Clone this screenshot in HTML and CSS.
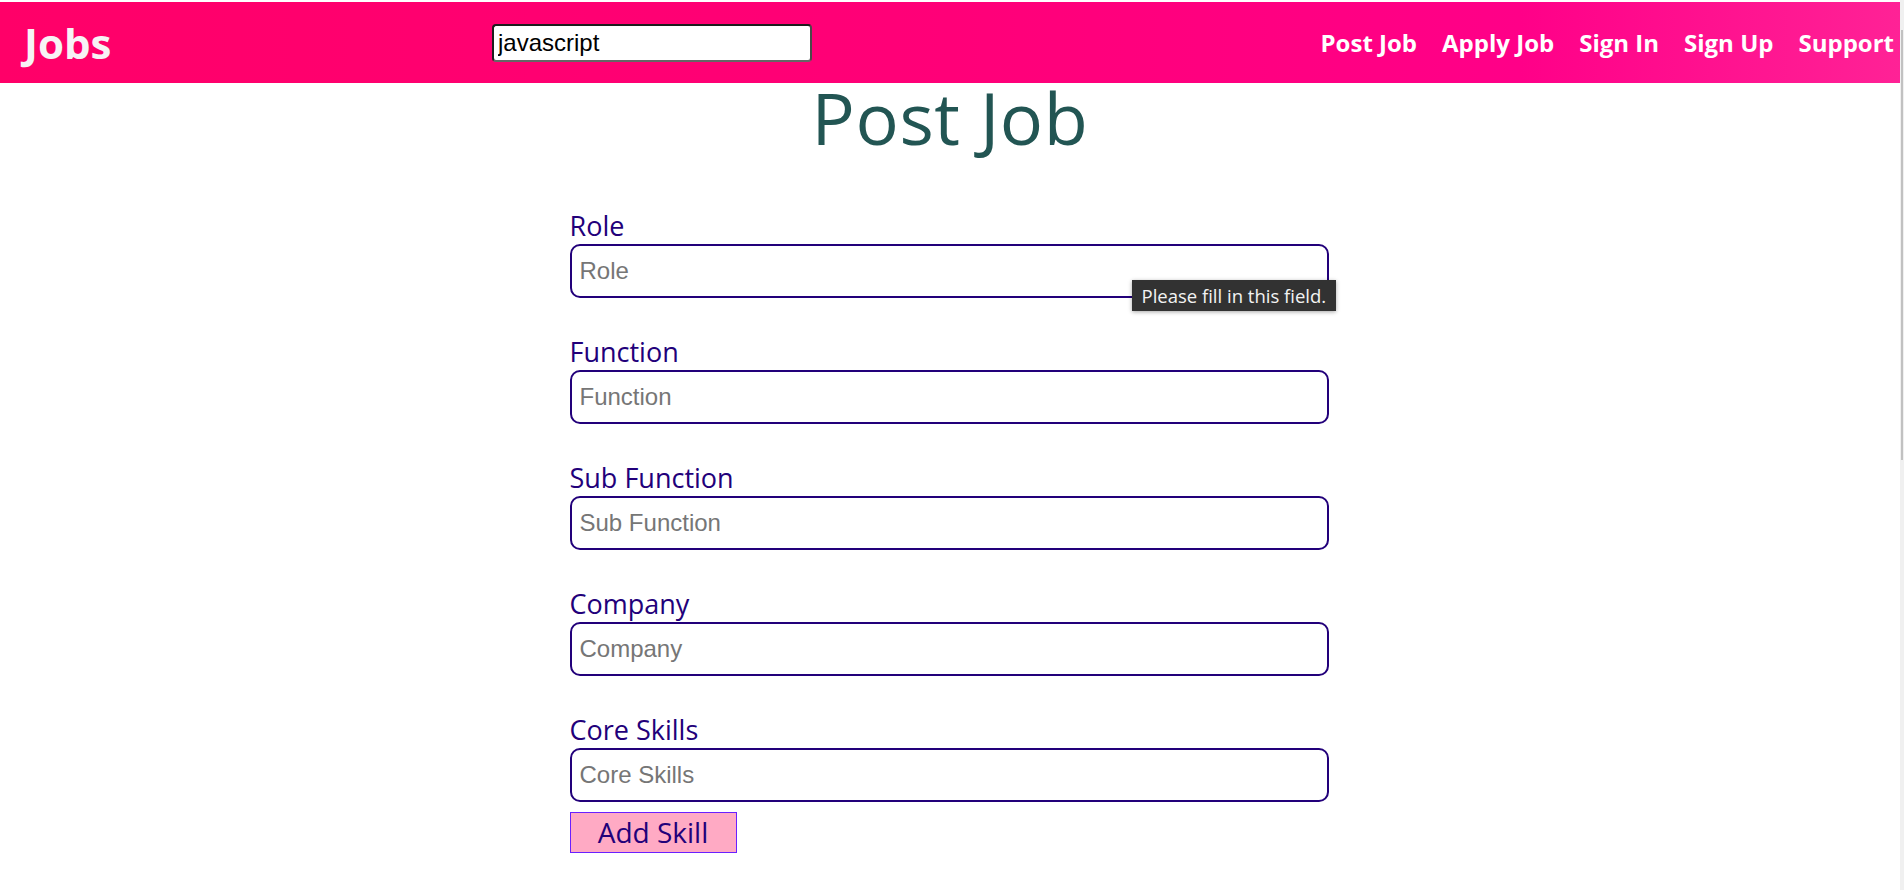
FILE: index.html
```html
<!DOCTYPE html>
<html lang="en">
<head>
<meta charset="utf-8">
<title>Post Job</title>
<link rel="stylesheet" href="styles.css">
</head>
<body>
<header class="topbar">
  <div class="brand">Jobs</div>
  <input class="search" type="text" value="javascript">
  <nav class="nav">
    <a href="#">Post Job</a>
    <a href="#">Apply Job</a>
    <a href="#">Sign In</a>
    <a href="#">Sign Up</a>
    <a href="#">Support</a>
  </nav>
</header>
<main class="page">
  <h1 class="title">Post Job</h1>
  <form class="job-form">
    <div class="field">
      <label class="field-label">Role</label>
      <div class="input-wrap">
        <input class="field-input" type="text" placeholder="Role">
        <div class="tooltip">Please fill in this field.</div>
      </div>
    </div>
    <div class="field">
      <label class="field-label">Function</label>
      <input class="field-input" type="text" placeholder="Function">
    </div>
    <div class="field">
      <label class="field-label">Sub Function</label>
      <input class="field-input" type="text" placeholder="Sub Function">
    </div>
    <div class="field">
      <label class="field-label">Company</label>
      <input class="field-input" type="text" placeholder="Company">
    </div>
    <div class="field field-last">
      <label class="field-label">Core Skills</label>
      <input class="field-input" type="text" placeholder="Core Skills">
    </div>
    <button class="add-btn" type="button">Add Skill</button>
  </form>
</main>
<div class="scrollbar"><div class="scrollbar-thumb"></div></div>
</body>
</html>
```
FILE: styles.css
```css
html, body {
  margin: 0;
  padding: 0;
  background: #ffffff;
}

body {
  margin-right: 4px;
  font-family: "Open Sans", "Noto Sans", sans-serif;
  overflow: hidden;
}

.topbar {
  margin-top: 2px;
  height: 81px;
  display: grid;
  grid-template-columns: 469px 320px 1fr;
  align-items: center;
  padding: 0 6px 0 24px;
  background: linear-gradient(90deg, #ff0068 0%, #ff0078 50%, #ff0088 80%, #ff2296 100%);
}

.brand {
  color: #f7f3f5;
  font-size: 42px;
  font-weight: 700;
  line-height: 1;
}

.search {
  box-sizing: border-box;
  width: 320px;
  height: 38px;
  margin: 1px 0 0 -1px;
  padding: 0 4px;
  border: 2px solid;
  border-color: #1d1d1d #4a4a4a #666666 #1d1d1d;
  border-radius: 4px;
  background: #ffffff;
  color: #000000;
  font-family: "Liberation Sans", Arial, sans-serif;
  font-size: 24px;
  outline: none;
}

.nav {
  display: flex;
  justify-content: flex-end;
  gap: 25px;
}

.nav a {
  color: #ffffff;
  text-decoration: none;
  font-size: 24px;
  font-weight: 700;
  line-height: 1;
}

.page {
  display: flex;
  flex-direction: column;
  align-items: center;
}

.title {
  margin: 0;
  font-size: 72px;
  font-weight: 400;
  letter-spacing: 0.6px;
  line-height: 68px;
  color: #225553;
  text-align: center;
}

.job-form {
  width: 759px;
  margin: 63px 2px 0 0;
  display: flex;
  flex-direction: column;
  align-items: flex-start;
}

.field {
  width: 100%;
  margin-bottom: 42px;
}

.field-last {
  margin-bottom: 10px;
}

.field-label {
  display: block;
  font-size: 27px;
  line-height: 24px;
  padding-bottom: 6px;
  color: #22007a;
}

.input-wrap {
  position: relative;
}

.field-input {
  display: block;
  box-sizing: border-box;
  width: 100%;
  height: 54px;
  margin: 0;
  padding: 0 8px;
  border: 2px solid #22007a;
  border-radius: 10px;
  background: #ffffff;
  font-family: "Liberation Sans", Arial, sans-serif;
  font-size: 24px;
  color: #222;
  outline: none;
}

.field-input::placeholder {
  color: #767676;
}

.tooltip {
  position: absolute;
  left: 562px;
  top: 36px;
  height: 31px;
  padding: 0 10px;
  background: #323232;
  color: #f2f2f2;
  font-size: 18.5px;
  line-height: 31px;
  white-space: nowrap;
  box-shadow: 0 1px 4px rgba(0, 0, 0, 0.35);
}

.add-btn {
  box-sizing: border-box;
  width: 167px;
  height: 41px;
  margin: 0;
  padding: 0;
  border: 1px solid #6a1fff;
  background: #ffaac4;
  color: #22007a;
  font-family: "Open Sans", "Noto Sans", sans-serif;
  font-size: 28px;
  line-height: 39px;
}

.scrollbar {
  position: fixed;
  top: 0;
  right: 0;
  width: 4px;
  height: 100%;
  background: #f0f0f0;
}

.scrollbar-thumb {
  position: absolute;
  top: 30px;
  left: 1px;
  width: 2px;
  height: 430px;
  background: #c1c1c1;
}
```
